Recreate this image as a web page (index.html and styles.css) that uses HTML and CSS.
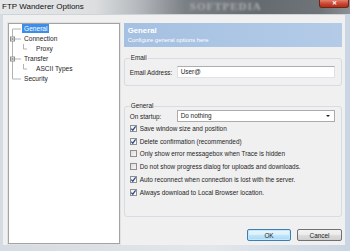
FILE: index.html
```html
<!DOCTYPE html>
<html lang="en">
<head>
    <meta charset="UTF-8">
    <title>FTP Wanderer Options</title>
    <link rel="stylesheet" href="styles.css">
</head>
<body>
    <div class="window">
        <div class="titlebar">
            <span class="title">FTP Wanderer Options</span>
            <span class="watermark">SOFTPEDIA</span>
            <span class="close">&#x2715;</span>
        </div>

        <div class="client">
            <div class="tree">
                <!-- tree connector lines -->
                <svg class="tree-lines" width="60" height="60" viewBox="0 0 60 60">
                    <g stroke="#b3b3b3" stroke-width="1" fill="none">
                        <path d="M3.5 5 V55"/>
                        <path d="M3.5 5 H12"/>
                        <path d="M6 15 H12"/>
                        <path d="M6 35 H12"/>
                        <path d="M3.5 55 H12"/>
                        <path d="M14.5 20 V25 H18"/>
                        <path d="M14.5 40 V45 H18"/>
                    </g>
                    <rect x="1.5" y="13" width="4" height="4" fill="#fff" stroke="#8f8f8f"/>
                    <path d="M2.5 15 H4.5" stroke="#333"/>
                    <rect x="1.5" y="33" width="4" height="4" fill="#fff" stroke="#8f8f8f"/>
                    <path d="M2.5 35 H4.5" stroke="#333"/>
                </svg>
                <ul>
                    <li class="lvl0"><span class="selected">General</span></li>
                    <li class="lvl0"><span>Connection</span></li>
                    <li class="lvl1"><span>Proxy</span></li>
                    <li class="lvl0"><span>Transfer</span></li>
                    <li class="lvl1"><span>ASCII Types</span></li>
                    <li class="lvl0"><span>Security</span></li>
                </ul>
            </div>

            <div class="panel">
                <div class="panel-head">
                    <h2>General</h2>
                    <p>Configure general options here</p>
                </div>

                <fieldset class="group email">
                    <legend>Email</legend>
                    <div class="field">
                        <label>Email Address:</label>
                        <div class="textbox">User@</div>
                    </div>
                </fieldset>

                <fieldset class="group general">
                    <legend>General</legend>
                    <div class="field">
                        <label>On startup:</label>
                        <div class="combo">
                            <span>Do nothing</span>
                            <span class="arrow"></span>
                        </div>
                    </div>
                    <div class="check on"><span class="box"><svg width="7" height="7" viewBox="0 0 7 7"><path d="M1.3 3.6 L2.8 5.2 L5.6 1.4" stroke="#24468a" stroke-width="1.2" fill="none"/></svg></span>Save window size and position</div>
                    <div class="check on"><span class="box"><svg width="7" height="7" viewBox="0 0 7 7"><path d="M1.3 3.6 L2.8 5.2 L5.6 1.4" stroke="#24468a" stroke-width="1.2" fill="none"/></svg></span>Delete confirmation (recommended)</div>
                    <div class="check"><span class="box"></span>Only show error messagebox when Trace is hidden</div>
                    <div class="check"><span class="box"></span>Do not show progress dialog for uploads and downloads.</div>
                    <div class="check on"><span class="box"><svg width="7" height="7" viewBox="0 0 7 7"><path d="M1.3 3.6 L2.8 5.2 L5.6 1.4" stroke="#24468a" stroke-width="1.2" fill="none"/></svg></span>Auto reconnect when connection is lost with the server.</div>
                    <div class="check on"><span class="box"><svg width="7" height="7" viewBox="0 0 7 7"><path d="M1.3 3.6 L2.8 5.2 L5.6 1.4" stroke="#24468a" stroke-width="1.2" fill="none"/></svg></span>Always download to Local Browser location.</div>
                </fieldset>

                <div class="buttons">
                    <button class="btn default">OK</button>
                    <button class="btn">Cancel</button>
                </div>
            </div>
        </div>
    </div>
</body>
</html>
```

FILE: styles.css
```css
body {
    margin: 0;
    padding: 0;
    font-family: "Liberation Sans", Tahoma, sans-serif;
    color: #1e1e1e;
    background-color: #e4e8ec;
}

.window {
    width: 350px;
    height: 251px;
    overflow: hidden;
    background: linear-gradient(to right, #d5dbe2 0, #e3e7eb 60%, #c9d5e2 100%);
}

.titlebar {
    height: 14px;
    display: flex;
    align-items: flex-start;
    overflow: hidden;
    background: linear-gradient(to right, #e5e7e9 0, #dcdee0 95px, #b3b7bb 140px, #7b8084 185px, #666b70 260px, #6f7478 320px, #8c9196 350px);
}

.title {
    font-size: 8px;
    line-height: 13px;
    padding-left: 2px;
    color: #111;
}

.watermark {
    margin-left: 106px;
    font-family: "Liberation Serif", serif;
    font-size: 11px;
    line-height: 12px;
    font-weight: bold;
    letter-spacing: 1px;
    color: #a9aeb2;
    filter: blur(0.8px);
}

.close {
    margin-left: auto;
    margin-right: 1px;
    width: 28px;
    height: 7px;
    font-size: 6px;
    line-height: 6px;
    text-align: center;
    color: #fff;
    font-weight: bold;
    border: 1px solid #6f2418;
    border-top: none;
    border-radius: 0 0 3px 3px;
    background: linear-gradient(#e3806c, #c7412b 60%, #b4301c);
}

.client {
    margin-left: 3px;
    width: 342px;
    height: 231px;
    box-sizing: border-box;
    padding: 8px 3px 2px 5px;
    background-color: #f0f0f0;
    border-top: 1px solid #cfd4d9;
    display: flex;
    gap: 4px;
}

/* tree view */

.tree {
    position: relative;
    width: 112px;
    height: 221px;
    box-sizing: border-box;
    background-color: #fff;
    border: 1px solid #a3a3a3;
    box-shadow: 0 0 0 1px #e2e2e2;
}

.tree-lines {
    position: absolute;
    left: 0;
    top: 0;
}

.tree ul {
    list-style: none;
    margin: 0;
    padding: 0;
}

.tree li {
    height: 10px;
    line-height: 10px;
    font-size: 6.6px;
}

.tree li span {
    padding: 0 2px;
    display: inline-block;
    height: 9px;
    line-height: 9px;
}

.tree .lvl0 {
    padding-left: 13px;
}

.tree .lvl1 {
    padding-left: 25px;
}

.tree .selected {
    background-color: #3d8ee6;
    color: #fff;
}

/* right panel */

.panel {
    width: 219px;
    display: flex;
    flex-direction: column;
}

.panel-head {
    height: 24px;
    box-sizing: border-box;
    padding: 3px 4px 0;
    background: linear-gradient(to right, #a5c0e1, #b3cbe7);
    color: #fff;
}

.panel-head h2 {
    margin: 0;
    font-size: 7.8px;
    line-height: 9px;
    font-weight: bold;
}

.panel-head p {
    margin: 1px 0 0;
    font-size: 5.9px;
    line-height: 8px;
}

.group {
    margin: 0;
    border: 1px solid #d5dce3;
    border-radius: 3px;
    padding: 0 6px 0 5px;
    font-size: 6.4px;
}

.group legend {
    padding: 0 1px;
    margin-left: 0;
    line-height: 8px;
}

.email {
    margin-top: 7px;
    padding-top: 4px;
    padding-bottom: 7px;
}

.general {
    margin-top: 16px;
    padding-bottom: 17px;
}

.field {
    display: flex;
    align-items: center;
    height: 12px;
}

.field label {
    width: 47px;
}

.textbox, .combo {
    width: 158px;
    height: 12px;
    box-sizing: border-box;
    background-color: #fff;
    border: 1px solid #dfe2e8;
    border-top-color: #abadb3;
    padding-left: 3px;
    line-height: 10px;
}

.combo {
    display: flex;
    align-items: center;
    justify-content: space-between;
    border: 1px solid #acacac;
    padding-right: 4px;
}

.arrow {
    width: 0;
    height: 0;
    border-left: 2px solid transparent;
    border-right: 2px solid transparent;
    border-top: 2px solid #222;
}

.check {
    display: flex;
    align-items: center;
    height: 12.8px;
    white-space: nowrap;
}

.check .box {
    width: 7px;
    height: 7px;
    box-sizing: border-box;
    margin-right: 3px;
    border: 1px solid #8f8f8f;
    background: linear-gradient(135deg, #dcdcdc, #f6f6f6);
    display: flex;
}

.check .box svg {
    margin: -1px;
}

.check.on .box {
    background: linear-gradient(135deg, #f0f0f0, #fdfdfd);
}

.buttons {
    margin-top: auto;
    display: flex;
    justify-content: flex-end;
    gap: 6px;
    padding-bottom: 2px;
}

.btn {
    width: 45px;
    height: 12px;
    padding: 0;
    font-family: "Liberation Sans", Tahoma, sans-serif;
    font-size: 6.4px;
    color: #1e1e1e;
    border: 1px solid #707070;
    border-radius: 2px;
    background: linear-gradient(#f2f2f2, #ebebeb 50%, #dddddd 51%, #cfcfcf);
}

.btn.default {
    width: 44px;
    border-color: #3c7fb1;
    background: linear-gradient(#eaf6fd, #d9f0fc 50%, #bee6fd 51%, #a7d9f5);
    box-shadow: inset 0 0 0 1px #c7e6f9;
}
```
